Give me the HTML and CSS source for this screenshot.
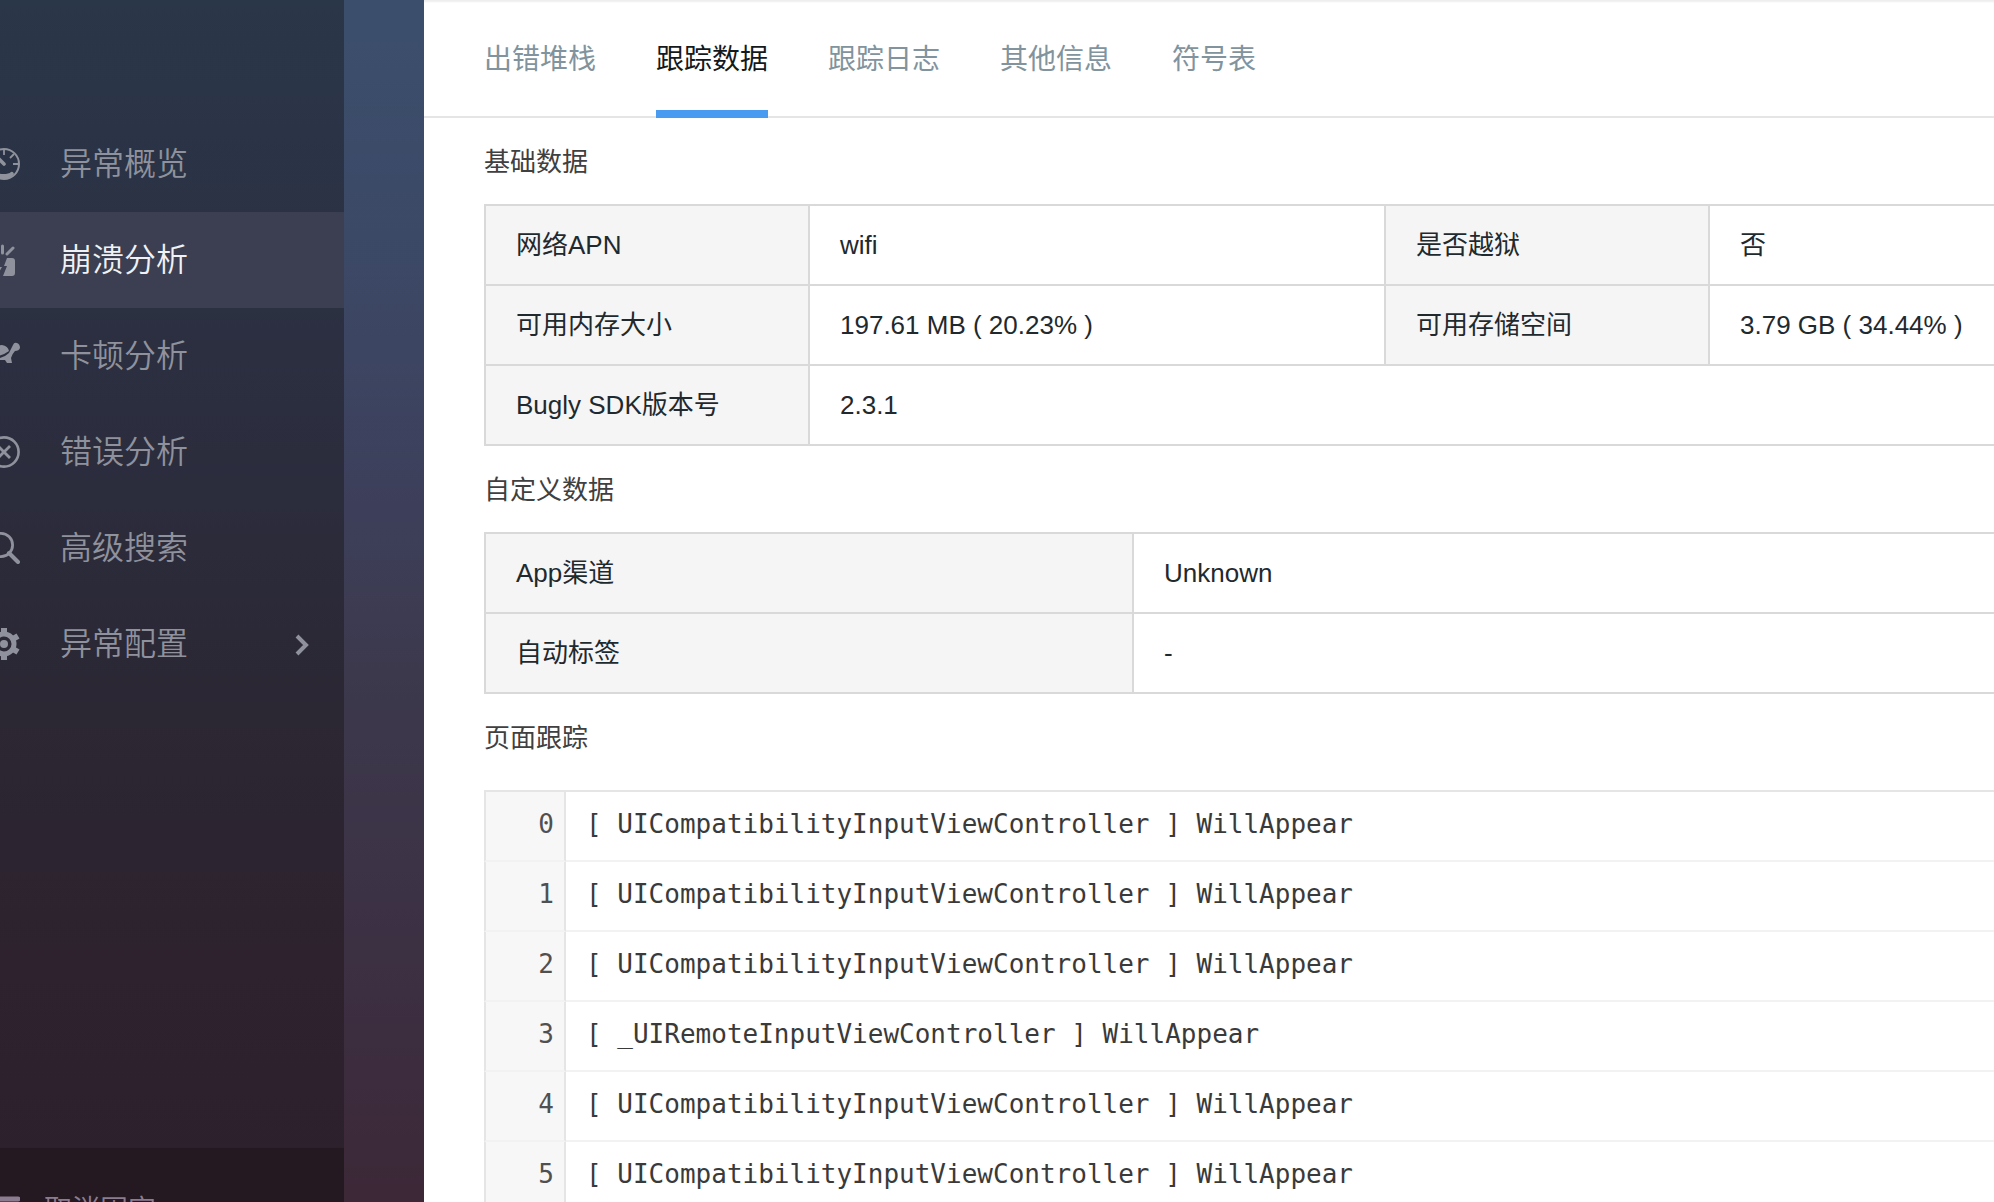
FILE: index.html
```html
<!DOCTYPE html>
<html lang="zh-CN">
<head>
<meta charset="utf-8">
<title>崩溃分析 - 跟踪数据</title>
<link rel="stylesheet" href="styles.css">
</head>
<body>
<div class="app">
  <aside class="sidebar">
    <nav class="menu">
      <a class="menu-item" href="#">
        <svg class="menu-icon" viewBox="0 0 32 32"><circle cx="16" cy="16" r="15" fill="none" stroke="currentColor" stroke-width="2"/><path d="M16 2v5M30 16h-5M2 16h5M26 6l-4 4M6 6l4 4" fill="none" stroke="currentColor" stroke-width="1.800"/><path d="M10 10l6 6" stroke="currentColor" stroke-width="3.600" stroke-linecap="round"/><path d="M6 24q4 2 9 2 6 0 8-2 2-1 3 2-4 5-10 5-6 0-10-5z" fill="currentColor"/></svg>
        <span>异常概览</span>
      </a>
      <a class="menu-item active" href="#">
        <svg class="menu-icon" viewBox="0 0 32 32"><path d="M14.500 2v7M25 4l-6 6M3 4l6 6" fill="none" stroke="currentColor" stroke-width="3" stroke-linecap="round"/><path d="M19 14h5q3 0 3 3v12q0 3-3 3h-9l4-10h-3zM0 14h12l-3 9h5l-5 9H0z" fill="currentColor"/></svg>
        <span>崩溃分析</span>
      </a>
      <a class="menu-item" href="#">
        <svg class="menu-icon" viewBox="0 0 32 32"><path d="M3 14Q6 5 14 5q6 1 7 6-8 6-18 5zM2 18q12 2 19-5l4-8q1-3 4-2 3 1 3 5-1 3-5 3-3 3-4 7l1 5h-5l-2-3h-6l-2 3H4z" fill="currentColor"/></svg>
        <span>卡顿分析</span>
      </a>
      <a class="menu-item" href="#">
        <svg class="menu-icon" viewBox="0 0 32 32"><path d="M10 10l12 12M22 10L10 22" stroke="currentColor" stroke-width="2.800"/><circle cx="16" cy="16" r="14.600" fill="none" stroke="currentColor" stroke-width="2.600"/></svg>
        <span>错误分析</span>
      </a>
      <a class="menu-item" href="#">
        <svg class="menu-icon" viewBox="0 0 32 32"><circle cx="13" cy="13" r="11.600" fill="none" stroke="currentColor" stroke-width="2.800"/><path d="M21 21l9 9" stroke="currentColor" stroke-width="4" stroke-linecap="round"/></svg>
        <span>高级搜索</span>
      </a>
      <a class="menu-item" href="#">
        <svg class="menu-icon" viewBox="0 0 32 32"><circle cx="16" cy="16" r="10" fill="none" stroke="currentColor" stroke-width="5"/><circle cx="16" cy="16" r="4" fill="currentColor"/><path d="M16 0v7M16 25v7M2 8l6 3.500M24 20.500l6 3.500M2 24l6-3.500M24 11.500L30 8" stroke="currentColor" stroke-width="6"/></svg>
        <span>异常配置</span>
        <svg class="menu-arrow" viewBox="0 0 14 24"><path d="M2 4l9 9-9 9" fill="none" stroke="currentColor" stroke-width="4"/></svg>
      </a>
    </nav>
    <button class="unpin" type="button">
      <svg class="unpin-icon" viewBox="0 0 32 28"><path d="M2 3h28M2 14h28M2 25h28" stroke="currentColor" stroke-width="5" stroke-linecap="round"/></svg>
      <span>取消固定</span>
    </button>
  </aside>
  <main class="panel">
    <nav class="tabs">
      <a class="tab" href="#">出错堆栈</a>
      <a class="tab current" href="#">跟踪数据</a>
      <a class="tab" href="#">跟踪日志</a>
      <a class="tab" href="#">其他信息</a>
      <a class="tab" href="#">符号表</a>
    </nav>
    <div class="content">
      <h2 class="title">基础数据</h2>
      <table class="data">
        <colgroup><col class="col-label"><col class="col-value"><col class="col-label"><col></colgroup>
        <tr><th scope="row">网络APN</th><td>wifi</td><th scope="row">是否越狱</th><td>否</td></tr>
        <tr><th scope="row">可用内存大小</th><td>197.61 MB ( 20.23% )</td><th scope="row">可用存储空间</th><td>3.79 GB ( 34.44% )</td></tr>
        <tr><th scope="row">Bugly SDK版本号</th><td colspan="3">2.3.1</td></tr>
      </table>
      <h2 class="title">自定义数据</h2>
      <table class="data">
        <colgroup><col class="col-wide"><col></colgroup>
        <tr><th scope="row">App渠道</th><td>Unknown</td></tr>
        <tr><th scope="row">自动标签</th><td>-</td></tr>
      </table>
      <h2 class="title">页面跟踪</h2>
      <table class="log">
        <tr><th scope="row">0</th><td>[ UICompatibilityInputViewController ] WillAppear</td></tr>
        <tr><th scope="row">1</th><td>[ UICompatibilityInputViewController ] WillAppear</td></tr>
        <tr><th scope="row">2</th><td>[ UICompatibilityInputViewController ] WillAppear</td></tr>
        <tr><th scope="row">3</th><td>[ _UIRemoteInputViewController ] WillAppear</td></tr>
        <tr><th scope="row">4</th><td>[ UICompatibilityInputViewController ] WillAppear</td></tr>
        <tr><th scope="row">5</th><td>[ UICompatibilityInputViewController ] WillAppear</td></tr>
      </table>
    </div>
  </main>
</div>
</body>
</html>
```
FILE: styles.css
```css
* { box-sizing: border-box; }

body {
  margin: 0;
  font-family: "Liberation Sans", "Noto Sans CJK SC", sans-serif;
  font-size: 26px;
  color: #1f292e;
}

a { color: inherit; text-decoration: none; }

.app {
  display: flex;
  gap: 80px;
  height: 100vh;
  overflow: hidden;
  background: linear-gradient(#3b4f6d, #3c4663 28%, #3d3f5a 42%, #3c394d 56%, #3c3043 80%, #3c2837);
}

/* Sidebar */
.sidebar {
  flex: none;
  display: flex;
  flex-direction: column;
  width: 344px;
  padding-top: 116px;
  background: linear-gradient(#2a3749, #2b3143 22%, #2b2c3c 42%, #2b2733 60%, #2d222e 80%, #2c202c);
  color: #8f929c;
}

.menu { flex: 1; }

.menu-item {
  display: flex;
  align-items: center;
  height: 96px;
  padding-right: 35px;
  font-size: 32px;
  font-weight: 350;
  line-height: 44px;
}

.menu-item.active { background: #3b3f51; }
.menu-item.active span { color: #f0f1f4; }

.menu-icon {
  flex: none;
  width: 32px;
  height: 32px;
  margin-left: -12px;
  margin-right: 40px;
}

.menu-arrow {
  width: 14px;
  height: 24px;
  margin-left: auto;
}

.unpin {
  flex: none;
  display: flex;
  align-items: flex-start;
  gap: 24px;
  height: 54px;
  padding: 45px 0 0;
  border: 0;
  overflow: hidden;
  background: #241821;
  color: #8b7c90;
  font: 350 28px/36px "Liberation Sans", "Noto Sans CJK SC", sans-serif;
}

.unpin-icon {
  flex: none;
  width: 32px;
  height: 28px;
  margin-left: -12px;
  margin-top: 3px;
}

/* Main panel */
.panel {
  flex: 1;
  min-width: 0;
  background: #fff;
  box-shadow: inset 0 3px 2px -1px #eeeeee;
}

.tabs {
  display: flex;
  gap: 60px;
  height: 118px;
  padding-left: 60px;
  border-bottom: 2px solid #e5e5e5;
}

.tab {
  height: 118px;
  font-size: 28px;
  line-height: 120px;
  color: #81939d;
}

.tab.current {
  border-bottom: 8px solid #499bf2;
  color: #14191c;
}

.content { padding-left: 60px; }

.title {
  margin: 0;
  padding-top: 2px;
  font-size: 26px;
  font-weight: 400;
  line-height: 84px;
  color: #404040;
}

.data {
  width: 100%;
  table-layout: fixed;
  border-collapse: separate;
  border-spacing: 0;
  border-top: 2px solid #d9d9d9;
  border-left: 2px solid #d9d9d9;
}

.col-label { width: 324px; }
.col-value { width: 576px; }
.col-wide { width: 648px; }

.data th,
.data td {
  height: 80px;
  padding: 0 28px 0 30px;
  border-bottom: 2px solid #d9d9d9;
  font-weight: 400;
  line-height: 30px;
  text-align: left;
  white-space: nowrap;
}

.data th {
  border-right: 2px solid #d9d9d9;
  background: #f5f5f5;
}

.data td:not(:last-child) { border-right: 2px solid #d9d9d9; }

.log {
  width: 100%;
  margin-top: 10px;
  border-spacing: 0;
  border-top: 2px solid #e5e5e5;
  font-family: "DejaVu Sans Mono", monospace;
  line-height: 30px;
  color: #3a3a3a;
}

.log th,
.log td {
  height: 70px;
  padding: 0 20px 4px;
  border-bottom: 2px solid #f2f2f2;
  font-weight: 400;
  text-align: left;
}

.log th {
  width: 82px;
  padding: 0 10px 4px;
  border-left: 2px solid #e5e5e5;
  border-right: 2px solid #e5e5e5;
  background: #f7f7f7;
  color: #505050;
  text-align: right;
}
```
